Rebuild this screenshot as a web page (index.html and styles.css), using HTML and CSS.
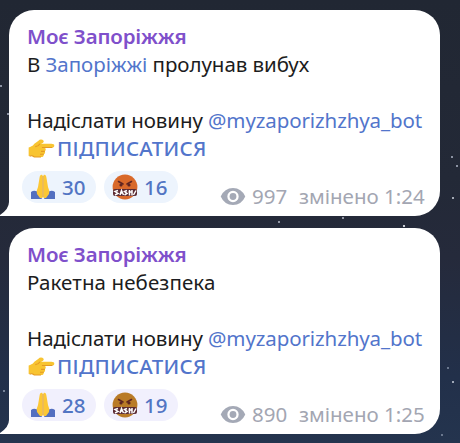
FILE: index.html
```html
<!DOCTYPE html>
<html lang="uk">
<head>
<meta charset="utf-8">
<title>Моє Запоріжжя</title>
<link rel="stylesheet" href="styles.css">
</head>
<body>
<svg class="defs" aria-hidden="true">
  <symbol id="point" viewBox="0 0 28 20">
    <path fill="#f8c431" d="M1 9C3 8 5 8 7 5L11 2Q14-1 17 2Q17 4 14 5H25Q28 5 28 7Q28 9 25 9H18Q20 11 18 13Q19 15 17 16Q17 19 14 19H6Q4 17 1 18Z"/>
    <path fill="none" stroke="#e59a24" stroke-width="1.2" d="M26 9H15M18 13H14M17 16H13M13 5Q11 8 8 8M2 18Q5 17 7 19H14"/>
  </symbol>
  <symbol id="pray" viewBox="0 0 26 26">
    <path fill="#536fc0" d="M1 18Q5 15 9 19L12 25H1ZM25 18Q21 15 17 19L14 25H25Z"/>
    <path fill="#fcc735" d="M12.5 1Q10 0 9.5 4L8 13Q6 17 7 20L10 24H12.5ZM13.5 1Q16 0 16.5 4L18 13Q20 17 19 20L16 24H13.5Z"/>
    <path fill="none" stroke="#e6a52d" stroke-width="1.2" d="M13 2V23"/>
  </symbol>
  <symbol id="rage" viewBox="0 0 26 26">
    <circle class="face" cx="13" cy="13" r="12.4"/>
    <path fill="none" stroke="#5f2522" stroke-width="1.6" stroke-linecap="round" d="M6.5 7.5L11 10M19.5 7.5L15 10"/>
    <circle fill="#5f2522" cx="9" cy="11" r="1.6"/><circle fill="#5f2522" cx="17" cy="11" r="1.6"/>
    <rect fill="#5b2b33" x="1" y="15" width="24" height="7" rx="2"/>
    <path fill="none" stroke="#fff" stroke-width="1.5" d="M6 16.5L3 17.5L6 19.5L3 21M8 21L9.5 16.5L11.5 21M8 19H11M15 16.5L12.5 17.5L15 19.5L12.5 21M17.5 16V21.5M16.5 18H20M20 16V21.5M21.5 21L24 16.5"/>
  </symbol>
  <symbol id="eye" viewBox="0 0 26 18">
    <path fill="#a4a9b6" fill-rule="evenodd" d="M0 9Q4 0 13 0T26 9Q22 18 13 18T0 9ZM13 3A6 6 0 1 0 13 15A6 6 0 1 0 13 3Z"/>
    <circle fill="#a4a9b6" cx="13" cy="9" r="3.6"/>
  </symbol>
  <symbol id="tail" viewBox="0 0 10 22">
    <path fill="#fff" d="M10 0H9V8Q9 15 0 21V22H10Z"/>
  </symbol>
</svg>
<main class="chat">
  <article class="bubble">
    <svg class="tail"><use href="#tail"/></svg>
    <p class="line author">Моє Запоріжжя</p>
    <p class="line first">В <a>Запоріжжі</a> пролунав вибух</p>
    <p class="line gap">Надіслати новину <a>@myzaporizhzhya_bot</a></p>
    <p class="line subscribe"><svg class="hand"><use href="#point"/></svg><a>ПІДПИСАТИСЯ</a></p>
    <footer class="footer">
      <span class="reaction"><svg class="emoji"><use href="#pray"/></svg>30</span>
      <span class="reaction"><svg class="emoji orange"><use href="#rage"/></svg>16</span>
      <span class="meta"><svg class="eye"><use href="#eye"/></svg><span class="views">997</span><span class="edited">змінено 1:24</span></span>
    </footer>
  </article>
  <article class="bubble">
    <svg class="tail"><use href="#tail"/></svg>
    <p class="line author">Моє Запоріжжя</p>
    <p class="line second">Ракетна небезпека</p>
    <p class="line gap">Надіслати новину <a>@myzaporizhzhya_bot</a></p>
    <p class="line subscribe"><svg class="hand"><use href="#point"/></svg><a>ПІДПИСАТИСЯ</a></p>
    <footer class="footer">
      <span class="reaction lilac"><svg class="emoji"><use href="#pray"/></svg>28</span>
      <span class="reaction lilac"><svg class="emoji olive"><use href="#rage"/></svg>19</span>
      <span class="meta"><svg class="eye"><use href="#eye"/></svg><span class="views">890</span><span class="edited">змінено 1:25</span></span>
    </footer>
  </article>
</main>
</body>
</html>
```
FILE: styles.css
```css
* { box-sizing: border-box; }
body {
  margin: 0;
  height: 443px;
  overflow: hidden;
  font-family: "Noto Sans", "Open Sans", sans-serif;
  font-size: 20.5px;
  color: #1c1c20;
  background:
    radial-gradient(circle at 452px 157px, #8c93a3 0 .7px, transparent 1.4px),
    radial-gradient(circle at 457px 166px, #8c93a3 0 .7px, transparent 1.4px),
    radial-gradient(circle at 453px 198px, #a4a9b4 0 .8px, transparent 1.5px),
    radial-gradient(circle at 404px 226px, #c9ccd3 0 .8px, transparent 1.6px),
    radial-gradient(circle at 279px 222px, #9297a5 0 .8px, transparent 1.5px),
    radial-gradient(circle at 343px 218px, #9297a5 0 .8px, transparent 1.5px),
    radial-gradient(circle at 453px 382px, #a0a9b8 0 .8px, transparent 1.5px),
    radial-gradient(circle at 448px 368px, #77849a 0 .6px, transparent 1.3px),
    radial-gradient(circle at 442px 435px, #77849a 0 .6px, transparent 1.3px),
    radial-gradient(circle at 1px 86px, #8c93a3 0 .8px, transparent 1.5px),
    radial-gradient(circle at 8px 114px, #8c93a3 0 .8px, transparent 1.5px),
    radial-gradient(circle at 4px 391px, #77849a 0 .7px, transparent 1.4px),
    linear-gradient(#212733, #232937 40%, #252a3b 58%, #22304a 85%, #24344e);
}
.defs { position: absolute; width: 0; height: 0; }
.chat {
  display: flex;
  flex-direction: column;
  gap: 12px;
  padding: 10px 20px 0 9px;
}
.bubble {
  position: relative;
  height: 206px;
  padding: 12px 15px 0 18px;
  background: #fff;
  border-radius: 25px 25px 25px 0;
}
.tail { position: absolute; left: -9px; bottom: 0; width: 10px; height: 22px; }
.line { margin: 0; height: 28px; line-height: 28px; white-space: nowrap; }
.first { letter-spacing: -.04px; }
.second { letter-spacing: .1px; }
.line.gap { margin-top: 28px; letter-spacing: -.1px; }
a { color: #5275cb; }
.author { color: #7f50cb; font-weight: 600; letter-spacing: -.15px; }
.subscribe { display: flex; align-items: center; font-weight: 500; letter-spacing: .3px; }
.hand { width: 28px; height: 19px; margin-right: 2px; }
.footer { display: flex; margin: 9px 0 0 -5px; height: 32px; }
.reaction {
  display: flex;
  align-items: center;
  width: 74px;
  height: 32px;
  margin-right: 8px;
  padding: 0 0 1px 8px;
  border-radius: 16px;
  background: #edf4fd;
  color: #5275c3;
  font-weight: 500;
}
.lilac { background: #f1f0fd; }
.emoji { width: 26px; height: 26px; margin-right: 6px; }
.orange { fill: #d9692a; }
.olive { fill: #b97b27; }
.meta { display: flex; align-items: center; margin-left: 34px; padding-top: 18px; color: #a3a6b2; white-space: nowrap; }
.eye { width: 26px; height: 17px; margin-right: 6px; flex: none; }
.views { width: 47px; }
```
